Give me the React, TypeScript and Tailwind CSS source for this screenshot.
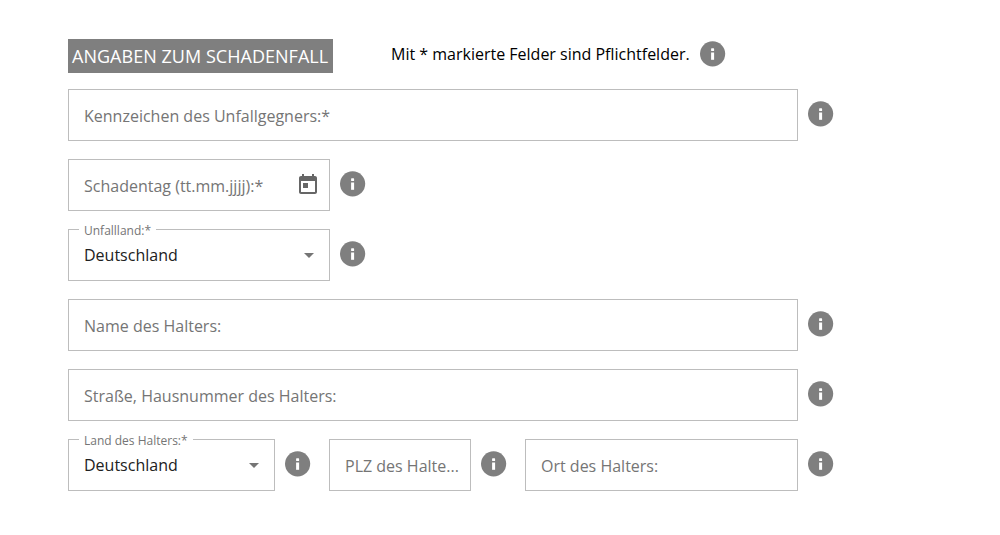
const font = "font-['Open_Sans',sans-serif]";

function InfoIcon() {
  return (
    <svg width="26" height="26" viewBox="0 0 26 26" className="shrink-0">
      <circle cx="12.6" cy="12.8" r="12.6" fill="#7f7f7f" />
      <rect x="11.1" y="7.3" width="3" height="2.7" rx="0.6" fill="#fff" />
      <rect x="11.1" y="11.5" width="3" height="7.3" fill="#fff" />
    </svg>
  );
}

function FieldInfo() {
  return (
    <div className="-mt-[2px]">
      <InfoIcon />
    </div>
  );
}

function CalendarIcon() {
  return (
    <svg width="24" height="24" viewBox="0 0 24 24" fill="#666666" className="shrink-0">
      <path d="M19 3h-1V1h-2v2H8V1H6v2H5c-1.11 0-1.99.9-1.99 2L3 19c0 1.1.89 2 2 2h14c1.1 0 2-.9 2-2V5c0-1.1-.9-2-2-2zm0 16H5V8h14v11zM7 10h5v5H7z" />
    </svg>
  );
}

function TextField({ label, icon, width }: { label: string; icon?: boolean; width: string }) {
  return (
    <div className={`flex h-[52px] items-center justify-between border border-[#bdbdbd] pl-[15px] pr-[9px] ${width}`}>
      <span className="whitespace-nowrap pt-[1px] text-[16px] text-[#757575]">{label}</span>
      {icon && <CalendarIcon />}
    </div>
  );
}

function SelectField({ label, width }: { label: string; width: string }) {
  return (
    <div className={`relative flex h-[52px] items-center justify-between border border-[#bdbdbd] pl-[15px] pr-[10px] ${width}`}>
      <span className="absolute left-[10px] top-[-7px] bg-white px-[5px] text-[12px] leading-[16px] text-[#757575]">
        {label}
      </span>
      <span className="text-[16px] text-[#212121]">Deutschland</span>
      <svg width="20" height="20" viewBox="0 0 20 20" fill="#757575">
        <path d="M5 8l5 5 5-5z" />
      </svg>
    </div>
  );
}

export default function App() {
  return (
    <div className={`min-h-[535px] w-[1000px] bg-white pl-[68px] pt-[39px] ${font}`}>
      <div className="flex items-start">
        <h1 className="flex h-[34px] w-[265px] items-center whitespace-nowrap bg-[#7f7f7f] pl-[4px] text-[18px] font-normal tracking-[0.03px] text-white">
          ANGABEN ZUM SCHADENFALL
        </h1>
        <div className="ml-[58px] flex h-[30px] items-center gap-[10px]">
          <span className="text-[16px] text-black">Mit * markierte Felder sind Pflichtfelder.</span>
          <InfoIcon />
        </div>
      </div>

      <div className="mt-[16px] flex flex-col gap-[18px]">
        <div className="flex items-center gap-[10px]">
          <TextField label="Kennzeichen des Unfallgegners:*" width="w-[730px]" />
          <FieldInfo />
        </div>
        <div className="flex items-center gap-[10px]">
          <TextField label="Schadentag (tt.mm.jjjj):*" icon width="w-[262px]" />
          <FieldInfo />
        </div>
        <div className="flex items-center gap-[10px]">
          <SelectField label="Unfallland:*" width="w-[262px]" />
          <FieldInfo />
        </div>
        <div className="flex items-center gap-[10px]">
          <TextField label="Name des Halters:" width="w-[730px]" />
          <FieldInfo />
        </div>
        <div className="flex items-center gap-[10px]">
          <TextField label="Straße, Hausnummer des Halters:" width="w-[730px]" />
          <FieldInfo />
        </div>
        <div className="flex items-center">
          <SelectField label="Land des Halters:*" width="w-[207px]" />
          <div className="ml-[10px] mr-[18px]">
            <FieldInfo />
          </div>
          <TextField label="PLZ des Halte..." width="w-[142px]" />
          <div className="ml-[10px] mr-[18px]">
            <FieldInfo />
          </div>
          <TextField label="Ort des Halters:" width="w-[273px]" />
          <div className="ml-[10px]">
            <FieldInfo />
          </div>
        </div>
      </div>
    </div>
  );
}
